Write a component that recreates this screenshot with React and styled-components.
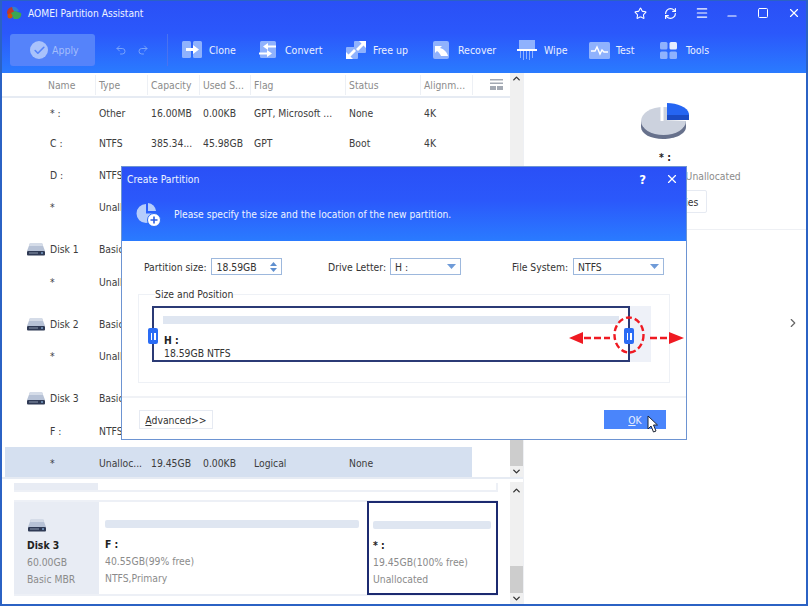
import React from 'react'
import styled, { createGlobalStyle } from 'styled-components'
import { Star, RefreshCw, Menu, Minus, Square, X, Undo2, Redo2, ChevronUp, ChevronDown, ChevronRight, Check } from 'lucide-react'

const GlobalStyle = createGlobalStyle`
  * { box-sizing: border-box; }
  html, body { margin: 0; padding: 0; background: #fff; }
  body {
    font-family: "DejaVu Sans Condensed", "DejaVu Sans", sans-serif;
    font-stretch: condensed;
    font-size: 10.3px;
    color: #333;
  }
`

const Window = styled.div`
  position: relative;
  width: 808px;
  height: 606px;
  overflow: hidden;
  background: #fff;
  border: 2px solid #2b62c4;
  border-top-width: 1px;
  display: flex;
  flex-direction: column;
`
const Header = styled.div`
  height: 72px;
  background: linear-gradient(180deg, #2a50f6 0%, #2b58fb 45%, #2a7bff 100%);
  color: #fff;
  flex: none;
`
const TitleBar = styled.div`
  height: 32px;
  display: flex;
  align-items: center;
  padding: 0 0 8px 4px;
`
const AppTitle = styled.span`
  margin-left: 6px;
  font-size: 10.2px;
  color: #eef3ff;
`
const WindowButtons = styled.div`
  margin-left: auto;
  display: flex;
  align-items: center;
  gap: 14.8px;
  padding-right: 4px;
`
const WindowButton = styled.div`
  width: 16px;
  display: flex;
  justify-content: center;
  color: #fff;
  margin-top: ${(p) => p.$drop || 0}px;
`
const Toolbar = styled.div`
  display: flex;
  align-items: center;
  height: 34px;
  padding-left: 8px;
`
const ApplyButton = styled.div`
  width: 85px;
  height: 32px;
  border-radius: 3px;
  background: #5583fa;
  display: flex;
  align-items: center;
  padding-left: 20px;
  gap: 4px;
  color: #a3bdfb;
  font-size: 10.5px;
`
const CheckDisc = styled.div`
  width: 18px;
  height: 18px;
  border-radius: 50%;
  background: #a9c2fb;
  color: #5583fa;
  display: flex;
  align-items: center;
  justify-content: center;
`
const UndoGroup = styled.div`
  width: 73px;
  height: 32px;
  display: flex;
  align-items: center;
  padding-left: 20px;
  gap: 10px;
  color: #78a3fb;
  border-right: 1px solid #4a72f0;
`
const ToolList = styled.div`
  display: flex;
  padding-left: 14px;
`
const Tool = styled.div`
  width: ${(p) => p.$w}px;
  display: flex;
  align-items: center;
  gap: ${(p) => p.$gap}px;
  font-size: 10.5px;
  color: #eaf0ff;
`
const Main = styled.div`
  flex: 1;
  display: flex;
  min-height: 0;
`
const LeftPane = styled.div`
  width: 521px;
  flex: none;
  display: flex;
  flex-direction: column;
`
const TablePane = styled.div`
  height: 404px;
  display: flex;
  flex: none;
`
const TableArea = styled.div`
  width: 508px;
  flex: none;
`
const TableHead = styled.div`
  height: 25px;
  display: grid;
  grid-template-columns: 94px 52px 52px 51px 95px 75px 52px 1fr;
  align-items: center;
  border-bottom: 2px solid #e6ebf3;
  color: #8b8b8b;
`
const HeadCell = styled.div`
  height: 20px;
  line-height: 20px;
  padding-left: ${(p) => p.$pad || 3}px;
  border-right: 1px solid #edf0f5;
  white-space: nowrap;
`
const ColumnsIcon = styled.div`
  display: flex;
  padding-left: 17px;
`
const Row = styled.div`
  height: ${(p) => p.$h}px;
  padding-top: ${(p) => p.$top}px;
  width: 470px;
  display: grid;
  grid-template-columns: 94px 52px 52px 51px 95px 75px 1fr;
  align-items: center;
  color: #3c3c3c;
  background: ${(p) => (p.$selected ? '#d5e0f0' : 'transparent')};
  margin-left: ${(p) => (p.$selected ? 3 : 0)}px;
  ${(p) => p.$selected && 'width: 467px; grid-template-columns: 91px 52px 52px 51px 95px 75px 1fr;'}
`
const NameCell = styled.div`
  display: flex;
  align-items: center;
  padding-left: ${(p) => p.$pad}px;
  gap: 4px;
  height: 100%;
`
const Cell = styled.div`
  padding-left: 3px;
  white-space: nowrap;
`
const Scrollbar = styled.div`
  width: 13px;
  flex: none;
  background: #f0f0f0;
  display: flex;
  flex-direction: column;
  align-items: center;
  color: #333;
  margin-top: ${(p) => p.$gap || 0}px;
  padding-top: ${(p) => p.$gap || 0}px;
`
const ScrollGap = styled.div`
  flex: 1;
`
const Thumb = styled.div`
  width: 100%;
  height: ${(p) => p.$h}px;
  background: #cdcdcd;
`
const MapPane = styled.div`
  flex: 1;
  display: flex;
  border-top: 2px solid #e6ebf3;
`
const MapArea = styled.div`
  width: 508px;
  flex: none;
  padding: 4px 0 0 12px;
`
const PartialRow = styled.div`
  width: 484px;
  height: 9px;
  border-bottom: 2px solid #edf0f6;
  border-right: 2px solid #edf0f6;
`
const PartialDisk = styled.div`
  width: 84px;
  height: 7px;
  background: #e8ecf4;
`
const DiskCard = styled.div`
  margin-top: 8px;
  width: 484px;
  height: 96px;
  display: flex;
  border-top: 2px solid #edf0f6;
  border-bottom: 2px solid #edf0f6;
`
const DiskInfo = styled.div`
  width: 85px;
  flex: none;
  background: #e8ecf4;
  padding: 16px 0 0 13px;
  color: #8b8b8b;
  line-height: 17px;
`
const DiskTitle = styled.div`
  font-weight: 700;
  color: #222;
`
const PartitionBlock = styled.div`
  width: ${(p) => p.$w}px;
  flex: none;
  padding: 18px ${(p) => p.$padr}px 0 ${(p) => p.$padl}px;
  color: #8b8b8b;
  line-height: 17px;
  margin-left: ${(p) => p.$ml || 0}px;
  margin-top: ${(p) => (p.$selected ? -1 : 0)}px;
  margin-bottom: ${(p) => (p.$selected ? -1 : 0)}px;
  border: ${(p) => (p.$selected ? '2px solid #1c2a70' : 'none')};
`
const UsageBar = styled.div`
  height: 8px;
  background: #dfe6f1;
  border-radius: 2px;
  margin-bottom: 8px;
`
const PartitionName = styled.div`
  font-weight: 700;
  color: #222;
`
const RightPanel = styled.div`
  flex: 1;
  display: flex;
  flex-direction: column;
  border-left: 1px solid #eef0f4;
`
const Summary = styled.div`
  height: 157px;
  flex: none;
  border-bottom: 1px solid #eef0f4;
  display: flex;
  flex-direction: column;
  align-items: center;
  padding-top: 28px;
`
const SummaryName = styled.div`
  font-weight: 700;
  color: #222;
  margin-top: 10px;
`
const SummaryText = styled.div`
  margin-top: 7px;
  padding-left: 18px;
  color: #8b8b8b;
  white-space: nowrap;
`
const PropertiesButton = styled.div`
  margin-top: 8px;
  width: 84px;
  height: 23px;
  padding-left: 20px;
  border: 1px solid #e6eaf2;
  border-radius: 2px;
  display: flex;
  align-items: center;
  justify-content: center;
  color: #333;
`
const Expander = styled.div`
  display: flex;
  justify-content: flex-end;
  padding: 86px 6px 0 0;
  color: #666;
`

const Dialog = styled.div`
  position: absolute;
  left: 119px;
  top: 165px;
  width: 566px;
  height: 274px;
  background: #fff;
  border: 1px solid #6d94d2;
  display: flex;
  flex-direction: column;
`
const DialogHead = styled.div`
  height: 74px;
  flex: none;
  background: linear-gradient(180deg, #2a50f6 0%, #2b58fb 45%, #2a7bff 100%);
  color: #eef3ff;
`
const DialogTitle = styled.div`
  height: 24px;
  display: flex;
  align-items: center;
  padding: 0 7px 0 5px;
`
const DialogButtons = styled.div`
  margin-left: auto;
  display: flex;
  align-items: center;
  gap: 19px;
  color: #fff;
`
const Question = styled.span`
  font-size: 13px;
  font-weight: 700;
`
const DialogIntro = styled.div`
  display: flex;
  align-items: center;
  gap: 13px;
  padding: 11px 0 0 14px;
  font-size: 10.2px;
`
const FormRow = styled.div`
  margin-top: 17px;
  display: grid;
  grid-template-columns: 184px 184px 1fr;
  padding-left: 22px;
`
const Field = styled.div`
  display: flex;
  align-items: center;
  gap: ${(p) => p.$gap || 4}px;
  color: #333;
`
const InputBox = styled.div`
  width: ${(p) => p.$w}px;
  height: 17px;
  border: 1px solid #9db8dd;
  display: flex;
  align-items: center;
  justify-content: space-between;
  padding: 0 4px 0 ${(p) => p.$pad}px;
  color: #333;
`
const Spin = styled.div`
  display: flex;
  flex-direction: column;
  gap: 2px;
`
const GroupBox = styled.fieldset`
  margin: 13px 16px 0;
  padding: 6px 18px 19px 13px;
  height: 95px;
  border: 1px solid #eef1f6;
  min-width: 0;
`
const GroupLegend = styled.legend`
  margin-left: 3px;
  padding: 0;
  line-height: 12px;
  color: #333;
`
const Track = styled.div`
  display: flex;
  height: 56px;
  background: transparent;
`
const NewPartition = styled.div`
  position: relative;
  width: 478px;
  flex: none;
  border: 2px solid #2b3a75;
  padding: 8px 9px 0 10px;
  line-height: 13px;
`
const Free = styled.div`
  flex: 1;
  background: #eef1f8;
`
const TrackBar = styled.div`
  height: 8px;
  margin-left: -1px;
  background: #dfe6f1;
  margin-bottom: 10px;
`
const Handle = styled.div`
  position: absolute;
  top: 20px;
  ${(p) => (p.$right ? 'right: -6px;' : 'left: -6px;')}
  width: 10px;
  height: 16px;
  border-radius: 2px;
  background: #2a6cf5;
  display: flex;
  align-items: center;
  justify-content: center;
  gap: 2px;
`
const HandleBar = styled.span`
  width: 1.5px;
  height: 7px;
  background: #fff;
`
const DragMark = styled.svg`
  position: absolute;
  left: 566px;
  top: 315px;
`
const DialogFoot = styled.div`
  margin-top: 13px;
  border-top: 2px solid #f0f2f6;
  padding: 12px 20px 0 17px;
  display: flex;
  justify-content: space-between;
`
const AdvancedButton = styled.div`
  width: 74px;
  height: 19px;
  border: 1px solid #e6eaf2;
  display: flex;
  align-items: center;
  justify-content: center;
`
const OkButton = styled.div`
  width: 62px;
  height: 19px;
  background: #4a85fb;
  color: #e8f0ff;
  display: flex;
  align-items: center;
  justify-content: center;
`
const Access = styled.span`
  text-decoration: underline;
`
const Cursor = styled.svg`
  position: absolute;
  left: 645px;
  top: 414px;
`

const rows = [
  { h: 29, top: 0, name: '* :', cells: ['Other', '16.00MB', '0.00KB', 'GPT, Microsoft ...', 'None', '4K'] },
  { h: 32, top: 0, name: 'C :', cells: ['NTFS', '385.34...', '45.98GB', 'GPT', 'Boot', '4K'] },
  { h: 32, top: 0, name: 'D :', cells: ['NTFS', '', '', '', '', ''] },
  { h: 32, top: 0, name: '*', cells: ['Unallocated', '', '', '', '', ''] },
  { h: 43, top: 8, disk: 'Disk 1', cells: ['Basic', '', '', '', '', ''] },
  { h: 32, top: 0, name: '*', cells: ['Unallocated', '', '', '', '', ''] },
  { h: 42, top: 10, disk: 'Disk 2', cells: ['Basic', '', '', '', '', ''] },
  { h: 32, top: 0, name: '*', cells: ['Unallocated', '', '', '', '', ''] },
  { h: 42, top: 10, disk: 'Disk 3', cells: ['Basic', '', '', '', '', ''] },
  { h: 33, top: 0, name: 'F :', cells: ['NTFS', '', '', '', '', ''] },
  { h: 30, top: 2, name: '*', selected: true, cells: ['Unalloc...', '19.45GB', '0.00KB', 'Logical', 'None', ''] },
]

const DiskIcon = () => (
  <svg width="20" height="14" viewBox="0 0 20 14">
    <path d="M4 1h12l3 8H1z" fill="#b7c2d6" />
    <path d="M4 1h12l1 3H3z" fill="#d5dce8" />
    <rect x="1" y="9" width="18" height="4.5" rx="1" fill="#2f3a55" />
    <rect x="3" y="10.5" width="9" height="1" fill="#8c97ad" />
    <rect x="15" y="10.5" width="2" height="1" fill="#9fd0ff" />
  </svg>
)

const Logo = () => (
  <svg width="16" height="14" viewBox="0 0 16 14">
    <path d="M1 7C1 3 4 1 7 1l2 3-3 5H2z" fill="#c0392b" />
    <path d="M6 1c3-1 6 1 7 4L9 6 7 4z" fill="#2e7dd1" />
    <path d="M5 7l4-2 6 2c1 3-1 5-3 6H8l-2-3z" fill="#3aa655" />
    <circle cx="4" cy="10" r="2.5" fill="#d35400" />
  </svg>
)

const CloneIcon = () => (
  <svg width="20" height="18" viewBox="0 0 20 18">
    <rect x="0" y="0" width="9" height="17" rx="1.5" fill="#8fb2fd" />
    <rect x="11" y="0" width="9" height="17" rx="1.5" fill="#8fb2fd" />
    <path d="M4 7h7V4l6 4.5L11 13v-3H4z" fill="#fff" />
  </svg>
)
const ConvertIcon = () => (
  <svg width="18" height="18" viewBox="0 0 18 18">
    <rect x="1" y="0" width="16" height="17" rx="1.5" fill="#8fb2fd" />
    <path d="M17 4.5H9V2L4 5.500 9 9V6.500h8z" fill="#fff" />
    <path d="M0 11.500h8V9l5 3.500L8 16v-2.500H0z" fill="#fff" />
  </svg>
)
const FreeUpIcon = () => (
  <svg width="20" height="18" viewBox="0 0 20 18">
    <rect x="0" y="6" width="12" height="12" rx="1" fill="#8fb2fd" />
    <rect x="8" y="0" width="12" height="12" rx="1" fill="#8fb2fd" />
    <path d="M13 0h7v7l-2.500-2.500L12 10l-2-2 5.500-5.500z" fill="#fff" />
    <path d="M0 18v-7l2.500 2.500L8 8l2 2-5.500 5.500L7 18z" fill="#fff" />
  </svg>
)
const RecoverIcon = () => (
  <svg width="16" height="18" viewBox="0 0 16 18">
    <rect x="0" y="0" width="16" height="18" rx="2" fill="#8fb2fd" />
    <path d="M2 5v7l2-2c2 1 3 3 4 5h7c-1-4-4-7-8-8l2-2z" fill="#fff" />
  </svg>
)
const WipeIcon = () => (
  <svg width="20" height="20" viewBox="0 0 20 20">
    <rect x="2" y="0" width="16" height="9" fill="#8fb2fd" />
    <rect x="0" y="9" width="20" height="2" fill="#fff" />
    <path d="M3 11h1v7H3zM6 11h1v9H6zM9 11h1v8H9zM12 11h1v9h-1zM15 11h1v7h-1z" fill="#8fb2fd" />
  </svg>
)
const TestIcon = () => (
  <svg width="21" height="17" viewBox="0 0 21 17">
    <rect x="0" y="0" width="21" height="17" rx="1.500" fill="#8fb2fd" />
    <path d="M2 9h4l2-4 3 7 2-4 2 2h4" fill="none" stroke="#fff" strokeWidth="1.400" />
  </svg>
)
const ToolsIcon = () => (
  <svg width="17" height="17" viewBox="0 0 17 17">
    <rect x="0" y="0" width="7.500" height="7.500" rx="1.500" fill="#8fb2fd" />
    <rect x="9.500" y="0" width="7.500" height="7.500" rx="1.500" fill="#e6eeff" />
    <rect x="0" y="9.500" width="7.500" height="7.500" rx="1.500" fill="#8fb2fd" />
    <rect x="9.500" y="9.500" width="7.500" height="7.500" rx="1.500" fill="#8fb2fd" />
  </svg>
)

const tools = [
  { label: 'Clone', w: 77, gap: 7, icon: <CloneIcon /> },
  { label: 'Convert', w: 87, gap: 8, icon: <ConvertIcon /> },
  { label: 'Free up', w: 87, gap: 7, icon: <FreeUpIcon /> },
  { label: 'Recover', w: 84, gap: 9, icon: <RecoverIcon /> },
  { label: 'Wipe', w: 72, gap: 7, icon: <WipeIcon /> },
  { label: 'Test', w: 71, gap: 6, icon: <TestIcon /> },
  { label: 'Tools', w: 70, gap: 9, icon: <ToolsIcon /> },
]

const Pie = () => (
  <svg width="50" height="40" viewBox="0 0 50 40">
    <path d="M1 20v6c0 7 10 12 22 12s23-5 23-12v-6z" fill="#67718c" />
    <ellipse cx="23.500" cy="20" rx="22.500" ry="14" fill="#ccd2de" />
    <path d="M23.500 20V6h-3V20H46v-1z" fill="#fff" />
    <path d="M27 2c10 0 21 4 22 11v5H27z" fill="#2565f2" />
    <path d="M27 14h22v5H27z" fill="#1a4bc4" />
  </svg>
)

const PartitionIcon = () => (
  <svg width="25" height="25" viewBox="0 0 25 25">
    <path d="M10 2a9.500 9.500 0 1 0 9.500 9.500H10z" fill="#b5cdfc" />
    <path d="M12 1a9 9 0 0 1 8 8h-8z" fill="#b5cdfc" />
    <circle cx="18" cy="18" r="6.500" fill="#fff" stroke="#2a6cf5" strokeWidth="1" />
    <path d="M18 14.500v7M14.500 18h7" stroke="#2a5de0" strokeWidth="1.600" />
  </svg>
)

const Stepper = () => (
  <Spin>
    <svg width="7" height="4" viewBox="0 0 7 4"><path d="M3.500 0L7 4H0z" fill="#5f8fcf" /></svg>
    <svg width="7" height="4" viewBox="0 0 7 4"><path d="M3.500 4L7 0H0z" fill="#5f8fcf" /></svg>
  </Spin>
)
const DropArrow = () => (
  <svg width="9" height="5" viewBox="0 0 9 5"><path d="M0 0h9L4.500 5z" fill="#6f9bd8" /></svg>
)

export default function App() {
  return (
    <>
      <GlobalStyle />
      <Window>
        <Header>
          <TitleBar>
            <Logo />
            <AppTitle>AOMEI Partition Assistant</AppTitle>
            <WindowButtons>
              <WindowButton><Star size={13} strokeWidth={2} /></WindowButton>
              <WindowButton><RefreshCw size={13} strokeWidth={2.200} /></WindowButton>
              <WindowButton><Menu size={14} strokeWidth={2} /></WindowButton>
              <WindowButton $drop={6}><Minus size={14} strokeWidth={2} /></WindowButton>
              <WindowButton><Square size={12} strokeWidth={2} /></WindowButton>
              <WindowButton><X size={14} strokeWidth={2} /></WindowButton>
            </WindowButtons>
          </TitleBar>
          <Toolbar>
            <ApplyButton>
              <CheckDisc><Check size={13} strokeWidth={3} /></CheckDisc>
              Apply
            </ApplyButton>
            <UndoGroup>
              <Undo2 size={12} strokeWidth={2} />
              <Redo2 size={12} strokeWidth={2} />
            </UndoGroup>
            <ToolList>
              {tools.map((t) => (
                <Tool key={t.label} $w={t.w} $gap={t.gap}>
                  {t.icon}
                  {t.label}
                </Tool>
              ))}
            </ToolList>
          </Toolbar>
        </Header>
        <Main>
          <LeftPane>
            <TablePane>
              <TableArea>
                <TableHead>
                  <HeadCell $pad={46}>Name</HeadCell>
                  <HeadCell>Type</HeadCell>
                  <HeadCell>Capacity</HeadCell>
                  <HeadCell>Used S...</HeadCell>
                  <HeadCell>Flag</HeadCell>
                  <HeadCell>Status</HeadCell>
                  <HeadCell>Alignm...</HeadCell>
                  <ColumnsIcon>
                    <svg width="13" height="11" viewBox="0 0 13 11">
                      <path d="M0 0h13v1.500H0zM0 3.500h13V5H0zM0 7h6v4H0zM7 7h6v4H7z" fill="#a3a9b3" />
                    </svg>
                  </ColumnsIcon>
                </TableHead>
                {rows.map((r, i) => (
                  <Row key={i} $h={r.h} $top={r.top} $selected={r.selected}>
                    {r.disk ? (
                      <NameCell $pad={24}>
                        <DiskIcon />
                        {r.disk}
                      </NameCell>
                    ) : (
                      <NameCell $pad={r.selected ? 45 : 48}>{r.name}</NameCell>
                    )}
                    {r.cells.map((c, j) => (
                      <Cell key={j}>{c}</Cell>
                    ))}
                  </Row>
                ))}
              </TableArea>
              <Scrollbar>
                <ChevronUp size={11} strokeWidth={3} />
                <ScrollGap />
                <Thumb $h={120} />
                <ChevronDown size={11} strokeWidth={3} />
              </Scrollbar>
            </TablePane>
            <MapPane>
              <MapArea>
                <PartialRow><PartialDisk /></PartialRow>
                <DiskCard>
                  <DiskInfo>
                    <DiskIcon />
                    <DiskTitle>Disk 3</DiskTitle>
                    <div>60.00GB</div>
                    <div>Basic MBR</div>
                  </DiskInfo>
                  <PartitionBlock $w={260} $padl={6} $padr={0}>
                    <UsageBar />
                    <PartitionName>F :</PartitionName>
                    <div>40.55GB(99% free)</div>
                    <div>NTFS,Primary</div>
                  </PartitionBlock>
                  <PartitionBlock $w={131} $ml={8} $padl={4} $padr={5} $selected>
                    <UsageBar />
                    <PartitionName>* :</PartitionName>
                    <div>19.45GB(100% free)</div>
                    <div>Unallocated</div>
                  </PartitionBlock>
                </DiskCard>
              </MapArea>
              <Scrollbar $gap={3}>
                <ChevronUp size={11} strokeWidth={3} />
                <ScrollGap />
                <Thumb $h={27} />
                <ChevronDown size={11} strokeWidth={3} />
              </Scrollbar>
            </MapPane>
          </LeftPane>
          <RightPanel>
            <Summary>
              <Pie />
              <SummaryName>* :</SummaryName>
              <SummaryText>19.45GB,Logical,Unallocated</SummaryText>
              <PropertiesButton>Properties</PropertiesButton>
            </Summary>
            <Expander><ChevronRight size={14} strokeWidth={2} /></Expander>
          </RightPanel>
        </Main>

        <Dialog>
          <DialogHead>
            <DialogTitle>
              Create Partition
              <DialogButtons>
                <Question>?</Question>
                <X size={14} strokeWidth={2} />
              </DialogButtons>
            </DialogTitle>
            <DialogIntro>
              <PartitionIcon />
              Please specify the size and the location of the new partition.
            </DialogIntro>
          </DialogHead>
          <FormRow>
            <Field>
              Partition size:
              <InputBox $w={71} $pad={5}>18.59GB<Stepper /></InputBox>
            </Field>
            <Field>
              Drive Letter:
              <InputBox $w={71} $pad={4}>H :<DropArrow /></InputBox>
            </Field>
            <Field $gap={5}>
              File System:
              <InputBox $w={91} $pad={4}>NTFS<DropArrow /></InputBox>
            </Field>
          </FormRow>
          <GroupBox>
            <GroupLegend>Size and Position</GroupLegend>
            <Track>
              <NewPartition>
                <TrackBar />
                <PartitionName>H :</PartitionName>
                <div>18.59GB NTFS</div>
                <Handle><HandleBar /><HandleBar /></Handle>
                <Handle $right><HandleBar /><HandleBar /></Handle>
              </NewPartition>
              <Free />
            </Track>
          </GroupBox>
          <DialogFoot>
            <AdvancedButton><span><Access>A</Access>dvanced&gt;&gt;</span></AdvancedButton>
            <OkButton><span><Access>O</Access>K</span></OkButton>
          </DialogFoot>
        </Dialog>

        <DragMark width="120" height="40" viewBox="0 0 120 40">
          <ellipse cx="61" cy="19" rx="14.500" ry="17.500" fill="none" stroke="#ef1a22" strokeWidth="2.400" strokeDasharray="6 3" />
          <path d="M1 22l14-6v12z" fill="#ef1a22" />
          <path d="M16 22h26" stroke="#ef1a22" strokeWidth="2.400" strokeDasharray="7 3" />
          <path d="M116 22l-15-6v12z" fill="#ef1a22" />
          <path d="M82 22h19" stroke="#ef1a22" strokeWidth="2.400" strokeDasharray="7 3" />
        </DragMark>
        <Cursor width="13" height="18" viewBox="0 0 13 18">
          <path d="M1 1v13l3-3 2.500 6 2.500-1-2.500-6h4z" fill="#fff" stroke="#1d2433" strokeWidth="1" />
        </Cursor>
      </Window>
    </>
  )
}
